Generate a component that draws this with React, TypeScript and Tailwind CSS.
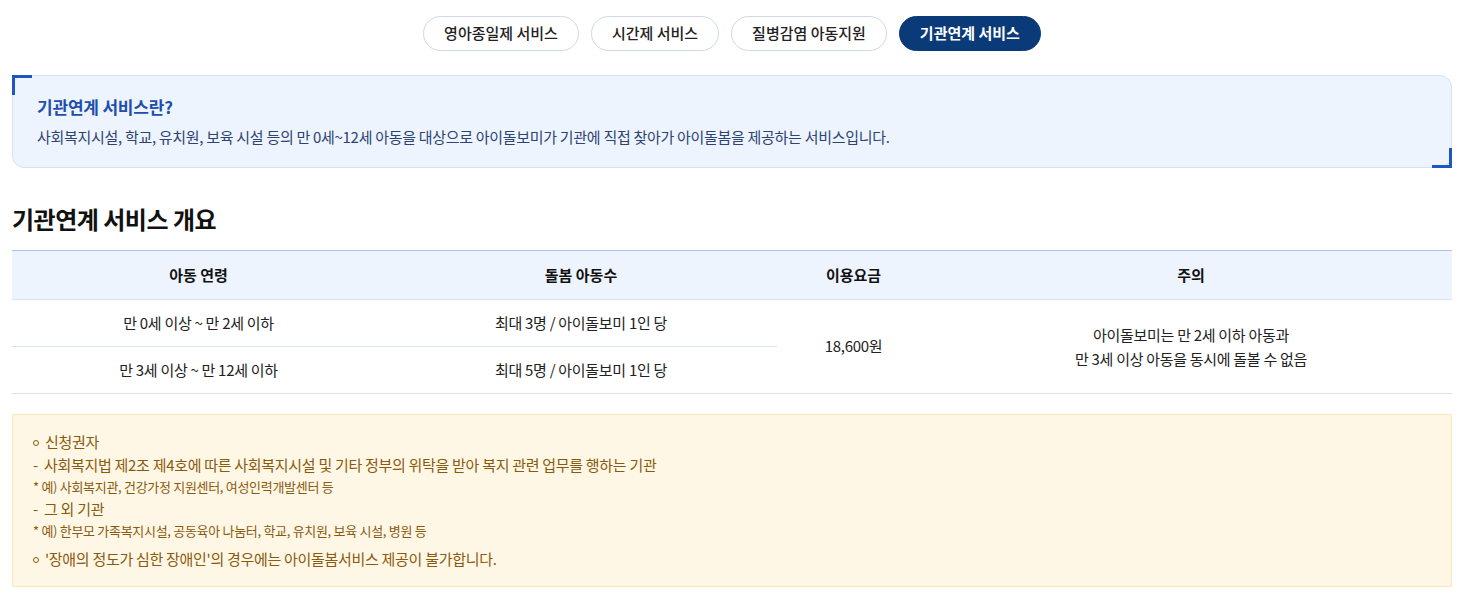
import React from "react";

const tabs = ["영아종일제 서비스", "시간제 서비스", "질병감염 아동지원", "기관연계 서비스"];

const rows = [
  { age: "만 0세 이상 ~ 만 2세 이하", count: "최대 3명 / 아이돌보미 1인 당" },
  { age: "만 3세 이상 ~ 만 12세 이하", count: "최대 5명 / 아이돌보미 1인 당" },
];

// small hollow bullet used in the notice box
const Dot = () => (
  <span className="mr-[6px] inline-block h-[6px] w-[6px] rounded-full border border-[#8a5a0c] align-[2px]" />
);

export default function App() {
  const active = 3;

  return (
    <div
      className="w-[1468px] bg-white pl-3 pr-4 pt-4 text-[#222]"
      style={{ fontFamily: '"Noto Sans CJK KR", "Noto Sans", sans-serif' }}
    >
      {/* tabs */}
      <div className="flex justify-center gap-3">
        {tabs.map((t, i) => (
          <button
            key={t}
            className={`h-[35px] rounded-full border px-5 text-[15px] ${
              i === active
                ? "border-[#0b3a78] bg-[#0b3a78] font-bold text-white"
                : "border-[#cfd8e6] bg-white font-medium text-[#222]"
            }`}
          >
            {t}
          </button>
        ))}
      </div>

      {/* intro box */}
      <div className="relative mt-[24px] h-[93px] rounded-xl border border-[#d4e2f7] bg-[#eef4fe] px-6 pt-[19px]">
        <span className="absolute -left-px -top-px h-[20px] w-[3px] bg-[#1f56c0]" />
        <span className="absolute -left-px -top-px h-[3px] w-[20px] bg-[#1f56c0]" />
        <span className="absolute -right-px -bottom-px h-[20px] w-[3px] bg-[#1f56c0]" />
        <span className="absolute -right-px -bottom-px h-[3px] w-[20px] bg-[#1f56c0]" />
        <h3 className="text-[17px] font-bold leading-[24px] tracking-[-0.2px] text-[#1d4fae]">
          기관연계 서비스란?
        </h3>
        <p className="mt-[7px] text-[15px] leading-[22px] tracking-[-0.3px] text-[#2d4373]">
          사회복지시설, 학교, 유치원, 보육 시설 등의 만 0세~12세 아동을 대상으로 아이돌보미가 기관에 직접 찾아가 아이돌봄을 제공하는 서비스입니다.
        </p>
      </div>

      {/* overview */}
      <h2 className="mt-[35px] text-[24px] font-bold leading-[32px] tracking-[-0.5px] text-[#111]">
        기관연계 서비스 개요
      </h2>

      <table className="mt-[15px] w-full table-fixed border-collapse text-center text-[15px] tracking-[-0.3px]">
        <colgroup>
          <col className="w-[373px]" />
          <col className="w-[392px]" />
          <col className="w-[153px]" />
          <col />
        </colgroup>
        <thead>
          <tr className="h-[49px] border-t border-[#a9c5f0] bg-[#eef4fe] font-bold tracking-normal text-[#111]">
            <th>아동 연령</th>
            <th>돌봄 아동수</th>
            <th>이용요금</th>
            <th>주의</th>
          </tr>
        </thead>
        <tbody className="text-[#222]">
          {rows.map((r, i) => (
            <tr key={r.age} className="h-[47px] border-t border-[#d6e3f5]">
              <td>{r.age}</td>
              <td>{r.count}</td>
              {i === 0 && (
                <>
                  <td rowSpan={2}>18,600원</td>
                  <td rowSpan={2} className="leading-[24px]">
                    아이돌보미는 만 2세 이하 아동과
                    <br />
                    만 3세 이상 아동을 동시에 돌볼 수 없음
                  </td>
                </>
              )}
            </tr>
          ))}
          <tr className="border-t border-[#d6e3f5]">
            <td colSpan={4} className="h-0 p-0" />
          </tr>
        </tbody>
      </table>

      {/* notice */}
      <div className="mt-[20px] mb-4 rounded-[2px] border border-[#fbe6b6] bg-[#fff7e6] px-5 pb-[16px] pt-[16px] tracking-[-0.3px] text-[#8a5a0c]">
        <p className="text-[15px] leading-[22px]"><Dot />신청권자</p>
        <p className="text-[15px] leading-[24px]">-&nbsp; 사회복지법 제2조 제4호에 따른 사회복지시설 및 기타 정부의 위탁을 받아 복지 관련 업무를 행하는 기관</p>
        <p className="text-[13px] leading-[20px]">* 예) 사회복지관, 건강가정 지원센터, 여성인력개발센터 등</p>
        <p className="text-[15px] leading-[24px]">-&nbsp; 그 외 기관</p>
        <p className="text-[13px] leading-[20px]">* 예) 한부모 가족복지시설, 공동육아 나눔터, 학교, 유치원, 보육 시설, 병원 등</p>
        <p className="mt-[7px] text-[15px] leading-[22px]"><Dot />'장애의 정도가 심한 장애인'의 경우에는 아이돌봄서비스 제공이 불가합니다.</p>
      </div>
    </div>
  );
}
